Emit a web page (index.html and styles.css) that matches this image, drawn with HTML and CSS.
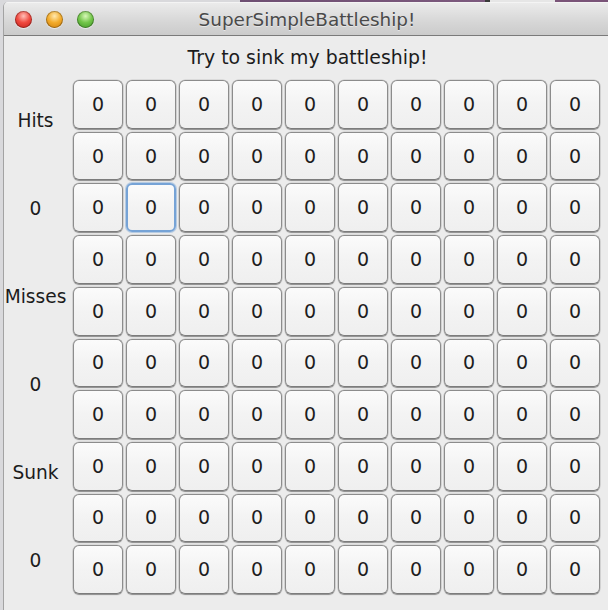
FILE: index.html
```html
<!DOCTYPE html>
<html>
<head>
<meta charset="utf-8">
<title>SuperSimpleBattleship!</title>
<link rel="stylesheet" href="styles.css">
</head>
<body>
<div class="desktop">
  <div class="window">
    <div class="titlebar">
      <div class="lights">
        <span class="light red"></span>
        <span class="light yellow"></span>
        <span class="light green"></span>
      </div>
      <div class="title">SuperSimpleBattleship!</div>
    </div>
    <div class="content">
      <div class="heading">Try to sink my battleship!</div>
      <div class="main">
        <div class="stats">
          <div class="stat">Hits</div>
          <div class="stat">0</div>
          <div class="stat">Misses</div>
          <div class="stat">0</div>
          <div class="stat">Sunk</div>
          <div class="stat">0</div>
        </div>
        <div class="board">
          <button class="cell">0</button><button class="cell">0</button><button class="cell">0</button><button class="cell">0</button><button class="cell">0</button><button class="cell">0</button><button class="cell">0</button><button class="cell">0</button><button class="cell">0</button><button class="cell">0</button>
          <button class="cell">0</button><button class="cell">0</button><button class="cell">0</button><button class="cell">0</button><button class="cell">0</button><button class="cell">0</button><button class="cell">0</button><button class="cell">0</button><button class="cell">0</button><button class="cell">0</button>
          <button class="cell">0</button><button class="cell focused">0</button><button class="cell">0</button><button class="cell">0</button><button class="cell">0</button><button class="cell">0</button><button class="cell">0</button><button class="cell">0</button><button class="cell">0</button><button class="cell">0</button>
          <button class="cell">0</button><button class="cell">0</button><button class="cell">0</button><button class="cell">0</button><button class="cell">0</button><button class="cell">0</button><button class="cell">0</button><button class="cell">0</button><button class="cell">0</button><button class="cell">0</button>
          <button class="cell">0</button><button class="cell">0</button><button class="cell">0</button><button class="cell">0</button><button class="cell">0</button><button class="cell">0</button><button class="cell">0</button><button class="cell">0</button><button class="cell">0</button><button class="cell">0</button>
          <button class="cell">0</button><button class="cell">0</button><button class="cell">0</button><button class="cell">0</button><button class="cell">0</button><button class="cell">0</button><button class="cell">0</button><button class="cell">0</button><button class="cell">0</button><button class="cell">0</button>
          <button class="cell">0</button><button class="cell">0</button><button class="cell">0</button><button class="cell">0</button><button class="cell">0</button><button class="cell">0</button><button class="cell">0</button><button class="cell">0</button><button class="cell">0</button><button class="cell">0</button>
          <button class="cell">0</button><button class="cell">0</button><button class="cell">0</button><button class="cell">0</button><button class="cell">0</button><button class="cell">0</button><button class="cell">0</button><button class="cell">0</button><button class="cell">0</button><button class="cell">0</button>
          <button class="cell">0</button><button class="cell">0</button><button class="cell">0</button><button class="cell">0</button><button class="cell">0</button><button class="cell">0</button><button class="cell">0</button><button class="cell">0</button><button class="cell">0</button><button class="cell">0</button>
          <button class="cell">0</button><button class="cell">0</button><button class="cell">0</button><button class="cell">0</button><button class="cell">0</button><button class="cell">0</button><button class="cell">0</button><button class="cell">0</button><button class="cell">0</button><button class="cell">0</button>
        </div>
      </div>
    </div>
  </div>
</div>
</body>
</html>
```

FILE: styles.css
```css
html, body {
  margin: 0;
  padding: 0;
  height: 100%;
  overflow: hidden;
}

body {
  font-family: "DejaVu Sans", "Liberation Sans", sans-serif;
  background: #ececec;
}

.desktop {
  height: 100%;
  padding: 2px 0 0 3px;
  box-sizing: border-box;
  background:
    linear-gradient(to right, #d9d9dc 0, #d9d9dc 240px, #6e4f72 240px, #7d5a7e 485px, #3a3a3a 485px, #3a3a3a 490px, #e6e6e6 490px, #e6e6e6 555px, #7a5478 555px);
}

.window {
  height: 100%;
  background: #ececec;
  border-left: 1px solid #a3a3a3;
  border-top-left-radius: 5px;
  display: flex;
  flex-direction: column;
  overflow: hidden;
}

.titlebar {
  height: 32px;
  flex: none;
  display: flex;
  align-items: center;
  background: linear-gradient(#ebebeb, #d6d6d6 60%, #cbcbcb);
  border-top: 1px solid #f4f4f4;
  border-bottom: 1px solid #7a7a7a;
}

.lights {
  display: flex;
  gap: 14px;
  padding-left: 11px;
  padding-top: 1px;
}

.light {
  width: 17px;
  height: 17px;
  border-radius: 50%;
  box-sizing: border-box;
  box-shadow: 0 1px 1px rgba(255,255,255,0.6), inset 0 0 0 1px rgba(0,0,0,0.28);
}

.red {
  background: radial-gradient(circle at 50% 30%, #ffc0b8 0, #f04a40 45%, #c01c16 100%);
}

.yellow {
  background: radial-gradient(circle at 50% 30%, #ffe9b0 0, #f3ac2c 45%, #cc7a08 100%);
}

.green {
  background: radial-gradient(circle at 50% 30%, #d8f7b8 0, #73c64a 45%, #3c9424 100%);
}

.title {
  flex: 1;
  text-align: center;
  font-size: 18.4px;
  color: #4a4a4a;
  margin-left: -88px;
  padding-top: 1px;
  text-shadow: 0 1px 0 rgba(255,255,255,0.5);
}

.content {
  flex: 1;
  display: flex;
  flex-direction: column;
}

.heading {
  text-align: center;
  font-size: 18.9px;
  line-height: 22px;
  color: #1c1c1c;
  padding: 10px 0 8px;
  padding-left: 3px;
}

.main {
  display: flex;
  gap: 6px;
}

.stats {
  width: 63px;
  height: 528px;
  display: flex;
  flex-direction: column;
}

.stat {
  flex: 1;
  display: flex;
  align-items: center;
  justify-content: center;
  font-size: 18.6px;
  color: #1c1c1c;
}

.board {
  margin-top: 4px;
  width: 527px;
  height: 514px;
  display: grid;
  grid-template-columns: repeat(10, 1fr);
  grid-template-rows: repeat(10, 1fr);
  gap: 3px;
}

.cell {
  margin: 0;
  padding: 0 0 1px;
  font-family: "DejaVu Sans", "Liberation Sans", sans-serif;
  font-size: 19px;
  color: #1e1e1e;
  background: linear-gradient(#fbfbfb, #f3f3f3 50%, #efefef);
  border: 1px solid #8c8c8c;
  border-bottom-color: #7c7c7c;
  border-radius: 6px;
  box-shadow: 0 1px 1px rgba(0,0,0,0.35), 0 0 0 0.5px rgba(0,0,0,0.15);
}

.cell.focused {
  border: 2px solid #76a3d6;
  box-shadow: 0 0 0 1px rgba(118,163,214,0.45);
}
```
